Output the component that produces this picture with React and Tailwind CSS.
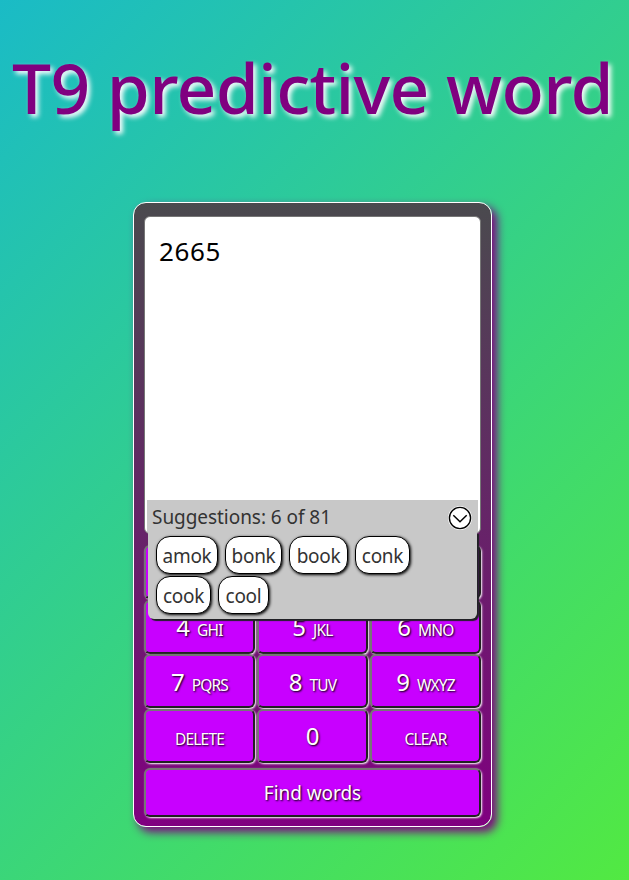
const KEYS = [
  ['1', ''], ['2', 'ABC'], ['3', 'DEF'],
  ['4', 'GHI'], ['5', 'JKL'], ['6', 'MNO'],
  ['7', 'PQRS'], ['8', 'TUV'], ['9', 'WXYZ'],
  ['', 'DELETE'], ['0', ''], ['', 'CLEAR'],
];

const WORDS = [
  ['amok', 'w-[62px]'],
  ['bonk', 'w-[57px]'],
  ['book', 'w-[59px]'],
  ['conk', 'w-[55px]'],
  ['cook', 'w-[55px]'],
  ['cool', 'w-[51px]'],
];

const KEY_STYLE =
  'flex items-center justify-center rounded-[6px] border-2 border-t-[#767676] border-l-[#767676] border-r-[#212121] border-b-[#212121] bg-[#c800ff] text-white [text-shadow:1px_1px_2px_black] shadow-[1px_1px_2px_white]';

function Key({ digit, letters }) {
  return (
    <button className={`${KEY_STYLE} h-[54px] ${digit && letters ? 'pt-[4px]' : 'pt-px'}`}>
      <span className="flex items-baseline gap-[7px]">
        {digit && <span className="text-[24px] leading-8">{digit}</span>}
        {letters && (
          <span className={`text-[15.5px] leading-8 tracking-[-0.8px] ${digit ? '' : 'pt-[5px]'}`}>{letters}</span>
        )}
      </span>
    </button>
  );
}

function Suggestions() {
  return (
    <div className="absolute left-[2px] top-[283px] w-[331px] text-[19px] text-[#333]">
      <div className="flex h-[32px] items-center justify-between bg-[#c8c8c8] pl-[5px] pr-[6px]">
        <span className="whitespace-nowrap pt-[2px] tracking-[-0.05px]">Suggestions: 6 of 81</span>
        <svg className="mt-[3px] h-6 w-6" viewBox="0 0 24 24" fill="none">
          <circle cx="12" cy="12" r="12" fill="white" />
          <circle cx="12" cy="12" r="10.6" stroke="black" strokeWidth="1.4" />
          <path d="M5.3 9.2 12 15.7l6.7-6.5" stroke="black" strokeWidth="1.5" />
        </svg>
      </div>
      <div className="ml-px flex h-[87px] w-[329px] flex-wrap content-start gap-x-[7px] gap-y-[2px] rounded-b-[6px] bg-[#c8c8c8] pl-[8px] pr-[60px] pt-[4px] shadow-[2px_2px_1px_#212126]">
        {WORDS.map(([word, width]) => (
          <span
            key={word}
            className={`${width} flex h-[38px] items-center justify-center rounded-[14px] border border-black bg-white pt-[2px] tracking-[-0.3px] shadow-[1px_1px_3px_black]`}
          >
            {word}
          </span>
        ))}
      </div>
    </div>
  );
}

export default function App() {
  return (
    <main className="flex h-[880px] w-full flex-col items-center overflow-hidden bg-[linear-gradient(135deg,#1abbc6,#52e942)] pr-[4px] font-['Noto_Sans','Open_Sans',sans-serif]">
      <h1 className="mt-[37px] h-[165px] whitespace-nowrap text-[69.5px] font-medium leading-[100px] tracking-[-0.7px] text-[#800080] [text-shadow:3px_3px_5px_white]">
        T9 predictive word
      </h1>
      <section className="flex h-[625px] w-[359px] flex-col rounded-[13px] border border-white bg-[linear-gradient(#4a4a4e,#800080)] px-[10px] pt-[13px] shadow-[5px_5px_10px_#800080]">
        <div className="relative h-[318px] w-full rounded-[6px] border border-[#767676] bg-white pl-[14px] pt-[14px]">
          <p className="text-[26px] leading-10 tracking-[0.6px] text-black">2665</p>
          <Suggestions />
        </div>
        <div className="mt-[11px] grid grid-cols-3 gap-x-[2px] gap-y-[0.5px]">
          {KEYS.map(([digit, letters]) => (
            <Key key={digit + letters} digit={digit} letters={letters} />
          ))}
        </div>
        <button className={`${KEY_STYLE} mt-[5px] h-[49px] w-full pt-[2px] text-[19px] tracking-[-0.05px]`}>Find words</button>
      </section>
    </main>
  );
}
